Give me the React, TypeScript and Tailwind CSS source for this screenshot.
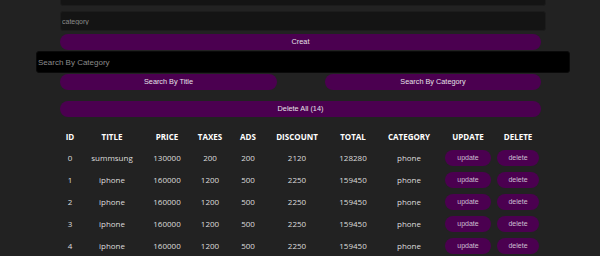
import React from 'react';

const rows = [
    { id: 0, title: 'summsung', price: 130000, taxes: 200, ads: 200, discount: 2120, total: 128280, category: 'phone' },
    { id: 1, title: 'iphone', price: 160000, taxes: 1200, ads: 500, discount: 2250, total: 159450, category: 'phone' },
    { id: 2, title: 'iphone', price: 160000, taxes: 1200, ads: 500, discount: 2250, total: 159450, category: 'phone' },
    { id: 3, title: 'iphone', price: 160000, taxes: 1200, ads: 500, discount: 2250, total: 159450, category: 'phone' },
    { id: 4, title: 'iphone', price: 160000, taxes: 1200, ads: 500, discount: 2250, total: 159450, category: 'phone' },
];

const cols = [
    { key: 'ID', w: 'w-[20px]' },
    { key: 'TITLE', w: 'w-[64px]' },
    { key: 'PRICE', w: 'w-[46px]' },
    { key: 'TAXES', w: 'w-[40px]' },
    { key: 'ADS', w: 'w-[36px]' },
    { key: 'DISCOUNT', w: 'w-[62px]' },
    { key: 'TOTAL', w: 'w-[50px]' },
    { key: 'CATEGORY', w: 'w-[62px]' },
    { key: 'UPDATE', w: 'w-[56px]' },
    { key: 'DELETE', w: 'w-[44px]' },
];

const btn = 'rounded-full bg-[#4b0050] text-[#e6e0e8] text-[7.3px] font-["Liberation_Sans",Arial,sans-serif] h-[16px]';

export default function App() {
    return (
        <div className="w-[600px] h-[256px] bg-[#222222] overflow-hidden">
            {/* Form */}
            <div className="pl-[60px] pr-[54px]">
                <input className="block w-full h-[20px] -mt-[14px] bg-[#141414] border border-[#1c1c1c] rounded-[3px] outline-none" />
                <input
                    placeholder="category"
                    className="block w-full h-[20px] mt-[5px] px-[1px] bg-[#141414] border border-[#1c1c1c] rounded-[3px] outline-none text-[7px] font-['Liberation_Sans',Arial,sans-serif] placeholder:text-[#8a8a8a]"
                />
                <button className={`block mt-[3px] w-[481px] ${btn}`}>Creat</button>
            </div>

            {/* Search */}
            <div className="pl-[36px] pr-[30px] mt-[1px]">
                <input
                    placeholder="Search By Category"
                    className="block w-full h-[22px] px-[1px] bg-black border border-[#0a0a0a] rounded-[3px] outline-none text-[8px] font-['Liberation_Sans',Arial,sans-serif] placeholder:text-[#8a8a8a]"
                />
            </div>
            <div className="flex pl-[60px] gap-[48px] mt-[1px]">
                <button className={`w-[217px] ${btn}`}>Search By Title</button>
                <button className={`w-[216px] ${btn}`}>Search By Category</button>
            </div>
            <div className="pl-[60px] mt-[11px]">
                <button className={`block w-[481px] ${btn}`}>Delete All (14)</button>
            </div>

            {/* Table */}
            <table className="ml-[60px] mt-[10px] border-collapse font-['Open_Sans',sans-serif] text-[8px] text-[#dddddd]">
                <thead>
                    <tr className="h-[20px]">
                        {cols.map((c) => (
                            <th key={c.key} className={`${c.w} p-0 text-center font-bold text-white`}>{c.key}</th>
                        ))}
                    </tr>
                </thead>
                <tbody>
                    {rows.map((r) => (
                        <tr key={r.id} className="h-[22px]">
                            <td className="p-0 text-center">{r.id}</td>
                            <td className="p-0 text-center">{r.title}</td>
                            <td className="p-0 text-center">{r.price}</td>
                            <td className="p-0 text-center">{r.taxes}</td>
                            <td className="p-0 text-center">{r.ads}</td>
                            <td className="p-0 text-center">{r.discount}</td>
                            <td className="p-0 text-center">{r.total}</td>
                            <td className="p-0 text-center">{r.category}</td>
                            <td className="p-0 text-center">
                                <button className="w-[46px] h-[16px] rounded-full bg-[#4b0050] text-[#cbbfd0] text-[7px] font-['Liberation_Sans',Arial,sans-serif] align-middle">update</button>
                            </td>
                            <td className="p-0 text-center">
                                <button className="w-[42px] h-[16px] rounded-full bg-[#4b0050] text-[#cbbfd0] text-[7px] font-['Liberation_Sans',Arial,sans-serif] align-middle">delete</button>
                            </td>
                        </tr>
                    ))}
                </tbody>
            </table>
        </div>
    );
}
